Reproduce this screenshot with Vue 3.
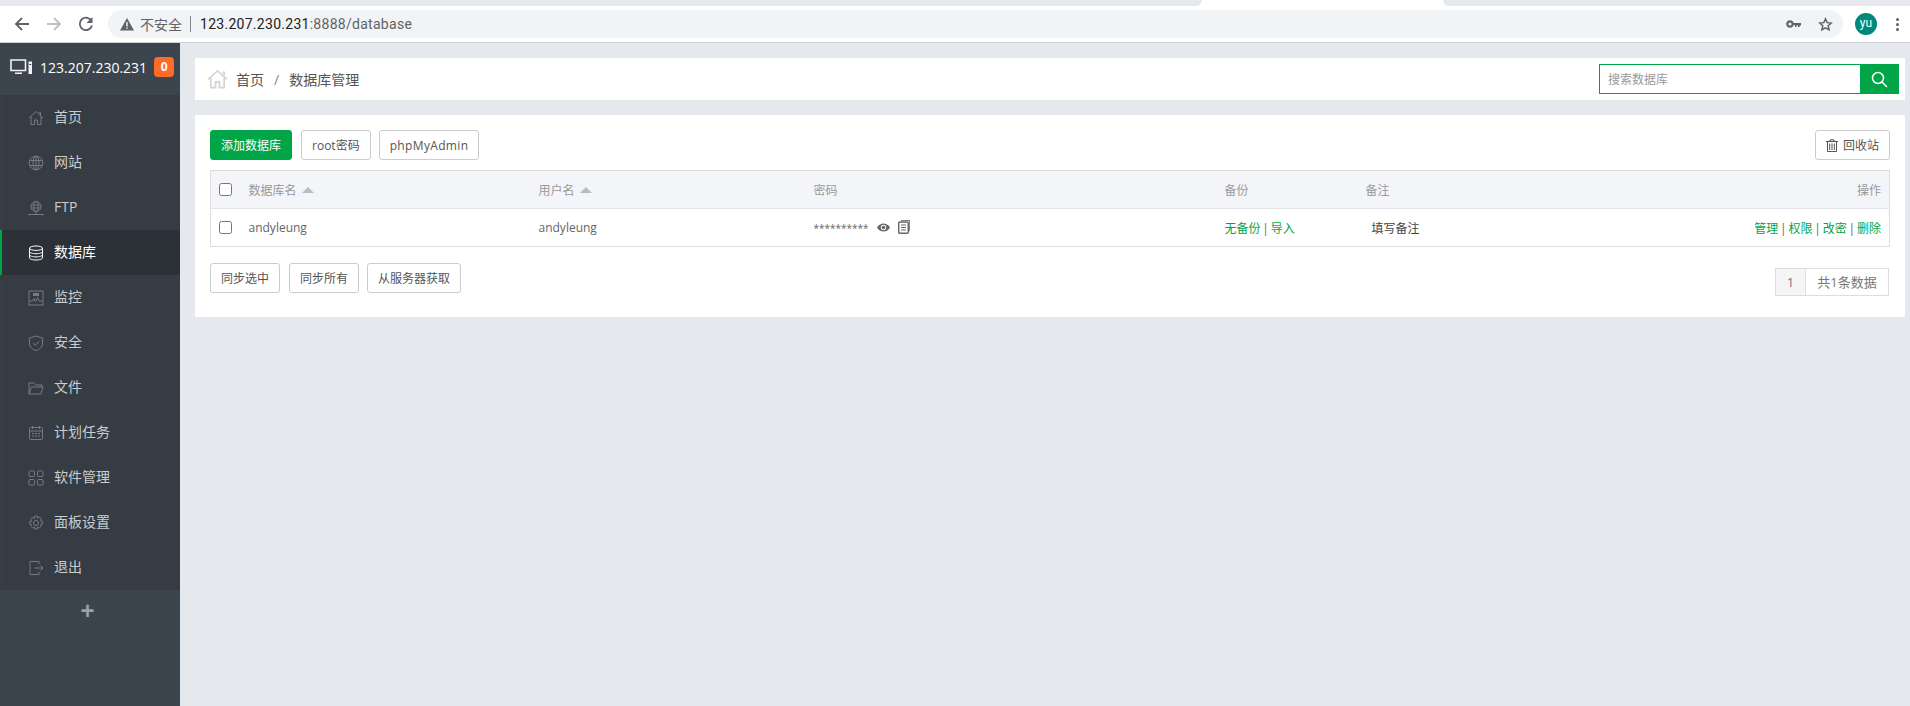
<template>
  <div class="page">
    <div class="tabstrip">
      <div class="tab-a"></div>
      <div class="tab-b"></div>
    </div>
    <div class="toolbar">
      <svg class="nav-ic first" width="16" height="16" viewBox="0 0 16 16"><path d="M15 8H2.500M8 2 2 8l6 6" fill="none" stroke="#5f6368" stroke-width="1.800"/></svg>
      <svg class="nav-ic" width="16" height="16" viewBox="0 0 16 16"><path d="M1 8h12.500M8 2l6 6-6 6" fill="none" stroke="#bdc1c6" stroke-width="1.800"/></svg>
      <svg class="nav-ic" width="16" height="16" viewBox="0 0 16 16"><path d="M13.600 5.200A6.200 6.200 0 1 0 14 9.500" fill="none" stroke="#5f6368" stroke-width="1.800"/><path d="M14.500 1v6h-6z" fill="#5f6368"/></svg>
      <div class="omnibox">
        <svg width="16" height="14" viewBox="0 0 16 14"><path d="M8 1 15 13.500H1z" fill="#5f6368"/><path d="M7.300 5h1.400v4.500H7.300zM7.300 10.400h1.400v1.400H7.300z" fill="#f1f3f4"/></svg>
        <span class="insecure">不安全</span>
        <span class="sep"></span>
        <span class="url"><span class="host">123.207.230.231</span>:8888/database</span>
        <svg class="key" width="15" height="8" viewBox="0 0 15 8"><circle cx="4" cy="4" r="2.700" fill="none" stroke="#5f6368" stroke-width="2.200"/><path d="M7 3h8v2.400h-1.400v1.600h-1.600V5.400H10.500V7H9V5H7z" fill="#5f6368"/></svg>
        <svg class="star" width="15" height="15" viewBox="0 0 24 24"><path d="m12 3 2.700 6 6.500.7-4.900 4.400 1.400 6.400L12 17.200l-5.700 3.300 1.400-6.400-4.900-4.400 6.500-.7z" fill="none" stroke="#5f6368" stroke-width="2.400"/></svg>
      </div>
      <div class="avatar">yu</div>
      <div class="dots"><i></i><i></i><i></i></div>
    </div>
    <div class="shell">
      <aside class="sidebar">
        <div class="server">
          <svg width="22" height="16" viewBox="0 0 22 16"><path d="M1 1h14.500v10.500H1z" fill="none" stroke="#f2f2f2" stroke-width="1.600"/><path d="M5 13.500h7v1.500H5z" fill="#f2f2f2"/><path d="M18.500 2.500h3.500V15h-3.500z" fill="#f2f2f2"/><path d="M19.300 5h2v1h-2z" fill="#3c444d"/></svg>
          <span class="ip">123.207.230.231</span>
          <span class="badge">0</span>
        </div>
        <nav class="menu">
          <a v-for="item in menu" :key="item.name" class="menu-item" :class="{ active: item.active }">
            <svg class="menu-ic" width="16" height="16" viewBox="0 0 16 16" v-html="item.icon"></svg>
            <span>{{ item.name }}</span>
          </a>
        </nav>
        <div class="plus">+</div>
      </aside>
      <main class="content">
        <div class="crumb-bar">
          <svg class="home" width="21" height="20" viewBox="0 0 22 20"><path d="M1 10.500 11 1.500l10 9M4 8.500V19h5v-6h4v6h5V8.500M16 3h2v3.500" fill="none" stroke="#d4d4d4" stroke-width="1.800"/></svg>
          <span class="crumb">首页</span>
          <span class="slash">/</span>
          <span class="crumb">数据库管理</span>
          <div class="search">
            <input class="search-input" placeholder="搜索数据库" />
            <button class="search-btn">
              <svg width="17" height="17" viewBox="0 0 17 17"><circle cx="7" cy="7" r="5.500" fill="none" stroke="#fff" stroke-width="1.500"/><path d="m11 11 5 5" stroke="#fff" stroke-width="1.500"/></svg>
            </button>
          </div>
        </div>
        <section class="panel">
          <div class="actions">
            <button class="btn primary">添加数据库</button>
            <button class="btn">root密码</button>
            <button class="btn wide">phpMyAdmin</button>
            <button class="btn recycle">
              <svg width="12" height="13" viewBox="0 0 12 13"><path d="M0 2.500h12M4 2.500V.8h4v1.700M1.500 2.500V12.500h9V2.500M3.700 4.500v6.500M6 4.500v6.500M8.300 4.500v6.500" fill="none" stroke="#555" stroke-width="1"/></svg>
              回收站
            </button>
          </div>
          <table class="grid">
            <colgroup>
              <col style="width: 38px" /><col style="width: 290px" /><col style="width: 275px" /><col style="width: 411px" /><col style="width: 141px" /><col /><col style="width: 300px" />
            </colgroup>
            <thead>
              <tr>
                <th><input type="checkbox" class="check" /></th>
                <th>数据库名 <i class="caret"></i></th>
                <th>用户名 <i class="caret"></i></th>
                <th>密码</th>
                <th>备份</th>
                <th>备注</th>
                <th class="right">操作</th>
              </tr>
            </thead>
            <tbody>
              <tr>
                <td><input type="checkbox" class="check" /></td>
                <td>andyleung</td>
                <td>andyleung</td>
                <td>
                  <span class="pw">**********</span>
                  <svg class="eye" width="13" height="9" viewBox="0 0 13 9"><path d="M0 4.500C2 1.500 4 .5 6.500.5S11 1.500 13 4.500C11 7.500 9 8.500 6.500 8.500S2 7.500 0 4.500z" fill="#666"/><circle cx="6.500" cy="4.500" r="2.700" fill="#fff"/><circle cx="6.500" cy="4.500" r="1.800" fill="#666"/></svg>
                  <svg class="copy" width="12" height="14" viewBox="0 0 12 14"><path d="M3 0h9v11h-1V1H3z" fill="#888"/><rect x=".7" y="2" width="9.600" height="11.300" rx="1" fill="#fff" stroke="#666" stroke-width="1.400"/><path d="M3 5h5M3 7.500h5M3 10h5" stroke="#666"/></svg>
                </td>
                <td class="ops"><a class="link">无备份</a> | <a class="link">导入</a></td>
                <td class="note">填写备注</td>
                <td class="right ops"><a class="link">管理</a> | <a class="link">权限</a> | <a class="link">改密</a> | <a class="link">删除</a></td>
              </tr>
            </tbody>
          </table>
          <div class="footer">
            <button class="btn">同步选中</button>
            <button class="btn">同步所有</button>
            <button class="btn">从服务器获取</button>
            <div class="pager">
              <span class="page-cur">1</span>
              <span class="page-total">共1条数据</span>
            </div>
          </div>
        </section>
      </main>
    </div>
  </div>
</template>

<script setup>
const stroke = 'fill="none" stroke="#767b80" stroke-width="1"'

const menu = [
  { name: '首页', icon: `<path d="M1 8 8 1.500 15 8M3 6.500V14.500h3.500V10h3v4.500H13V6.500M11 2.500h1.500V5" ${stroke}/>` },
  { name: '网站', icon: `<circle cx="8" cy="8" r="6.800" ${stroke}/><ellipse cx="8" cy="8" rx="3" ry="6.800" ${stroke}/><path d="M1.500 5.500h13M1.500 10.500h13M8 1v14" ${stroke}/>` },
  { name: 'FTP', icon: `<circle cx="8" cy="6.500" r="5" ${stroke}/><ellipse cx="8" cy="6.500" rx="2.200" ry="5" ${stroke}/><path d="M3 5h10M3 8h10M8 11.500V14M0 14.500h16" ${stroke}/>` },
  { name: '数据库', active: true, icon: `<ellipse cx="8" cy="3.200" rx="6.500" ry="2.200" fill="none" stroke="#fff"/><path d="M1.500 3.200v9.600c0 1.200 2.900 2.200 6.500 2.200s6.500-1 6.500-2.200V3.200M1.500 6.500c0 1.200 2.900 2.200 6.500 2.200s6.500-1 6.500-2.200M1.500 9.700c0 1.200 2.900 2.200 6.500 2.200s6.500-1 6.500-2.200" fill="none" stroke="#fff"/>` },
  { name: '监控', icon: `<rect x="1" y="1" width="14" height="14" ${stroke}/><path d="M2 11h2.500l1.500-2.500 1.500 3 2-4 1.500 3.500H14" ${stroke}/><path d="M5 3h6v3H5z" fill="#767b80"/>` },
  { name: '安全', icon: `<path d="M8 1 14.500 3v6c0 3-3 5.500-6.500 6.500C4.500 14.500 1.500 12 1.500 9V3z" ${stroke}/><path d="m5 8 2.200 2.200L11 6.500" ${stroke}/>` },
  { name: '文件', icon: `<path d="M1 14V3h5l1.500 2H14v2M1 14 3.500 7H15l-2 7z" ${stroke}/>` },
  { name: '计划任务', icon: `<rect x="1.500" y="2.500" width="13" height="12" rx="1" ${stroke}/><path d="M1.500 6h13M4.500 1v3M11.500 1v3M4 8.500h2M7 8.500h2M10 8.500h2M4 11h2M7 11h2M10 11h2" ${stroke}/>` },
  { name: '软件管理', icon: `<rect x="1" y="1" width="5.500" height="5.500" rx="1" ${stroke}/><rect x="9.500" y="1" width="5.500" height="5.500" rx="1" ${stroke}/><rect x="1" y="9.500" width="5.500" height="5.500" rx="1" ${stroke}/><rect x="9.500" y="9.500" width="5.500" height="5.500" rx="1" ${stroke}/>` },
  { name: '面板设置', icon: `<circle cx="8" cy="8" r="2.500" ${stroke}/><path d="m6.700 1h2.600l.4 2 1.800-.9 1.900 1.900-.9 1.800 2 .4v2.600l-2 .4.900 1.800-1.900 1.900-1.800-.9-.4 2H6.700l-.4-2-1.800.9-1.900-1.900.9-1.800-2-.4V6.700l2-.4-.9-1.800L4.500 2.600l1.800.9z" ${stroke}/>` },
  { name: '退出', icon: `<path d="M11 4V1.500H2v13h9V12M6.500 8H15M12.500 5.500 15 8l-2.500 2.500" ${stroke}/>` },
]
</script>

<style>
html, body {
  margin: 0;
  height: 100%;
  overflow: hidden;
}
</style>

<style scoped>
.page {
  width: 1910px;
  height: 706px;
  display: flex;
  flex-direction: column;
  font-family: "Open Sans", "Noto Sans CJK SC", sans-serif;
  background: #e5e8ed;
}
.tabstrip {
  height: 6px;
  flex: none;
  display: flex;
  justify-content: space-between;
  background: #fff;
}
.tab-a {
  width: 1202px;
  background: #e5e8ec;
  border-bottom-right-radius: 6px;
}
.tab-b {
  width: 467px;
  background: #e5e8ec;
  border-bottom-left-radius: 6px;
}
.toolbar {
  height: 36px;
  flex: none;
  display: flex;
  align-items: center;
  background: #fff;
  border-bottom: 1px solid #ced1d6;
}
.nav-ic { margin-left: 16px; }
.nav-ic.first { margin-left: 14px; }
.omnibox {
  width: 1735px;
  height: 28px;
  margin-left: 14px;
  border-radius: 14px;
  background: #f1f3f4;
  display: flex;
  align-items: center;
  padding-left: 11px;
  box-sizing: border-box;
  font-family: "Roboto", "Noto Sans CJK SC", sans-serif;
  font-size: 14px;
  color: #5f6368;
}
.insecure { margin-left: 5px; font-size: 14px; }
.sep { width: 1px; height: 16px; background: #80868b; margin: 0 9px 0 8px; }
.url { flex: 1; letter-spacing: .28px; }
.host { color: #202124; }
.key { margin-right: 17px; }
.star { margin-right: 10px; }
.avatar {
  width: 22px;
  height: 22px;
  margin-left: 12px;
  border-radius: 50%;
  background: #00897b;
  color: #fff;
  font: 12px/20px "Roboto", sans-serif;
  text-align: center;
}
.dots {
  margin-left: 19px;
  display: flex;
  flex-direction: column;
  gap: 2px;
}
.dots i { width: 3px; height: 3px; border-radius: 50%; background: #5f6368; }
.shell {
  flex: 1;
  display: flex;
  min-height: 0;
}
.sidebar {
  width: 180px;
  flex: none;
  background: #3c444d;
}
.server {
  height: 52px;
  display: flex;
  align-items: center;
  padding-left: 10px;
  padding-bottom: 4px;
  box-sizing: border-box;
  color: #fff;
}
.ip { margin-left: 8px; font-size: 14px; }
.badge {
  margin-left: 7px;
  width: 20px;
  height: 20px;
  border-radius: 4px;
  background: #ff6a26;
  font-size: 12px;
  font-weight: 700;
  line-height: 20px;
  text-align: center;
}
.menu { background: #353c44; }
.menu-item {
  height: 45px;
  display: flex;
  align-items: center;
  padding-left: 26px;
  border-left: 2px solid #3a3e42;
  color: #ccc;
  font-size: 14px;
}
.menu-item span { margin-left: 10px; line-height: 18px; padding-bottom: 2px; }
.menu-item.active {
  background: #2c3138;
  border-left-color: #00a548;
  color: #fff;
}
.plus {
  margin-top: 9px;
  padding-right: 5px;
  text-align: center;
  font: 700 24px/24px "Liberation Sans", sans-serif;
  color: #9aa0a6;
}
.content {
  flex: 1;
  padding: 15px 5px 0 15px;
  min-width: 0;
}
.crumb-bar {
  height: 42px;
  background: #fff;
  display: flex;
  align-items: center;
  padding-left: 12px;
  font-size: 14px;
  color: #555;
}
.home { margin-right: 8px; }
.slash { margin: 0 10px; color: #888; }
.search {
  margin-left: auto;
  margin-right: 6px;
  display: flex;
  height: 30px;
}
.search-input {
  width: 261px;
  box-sizing: border-box;
  border: 1px solid #00a548;
  border-right: 0;
  outline: 0;
  padding: 0 8px;
  font: 12px "Open Sans", "Noto Sans CJK SC", sans-serif;
}
.search-input::placeholder { color: #999; }
.search-btn {
  width: 39px;
  border: 0;
  padding: 0;
  background: #00a548;
  display: flex;
  align-items: center;
  justify-content: center;
}
.panel {
  margin-top: 15px;
  background: #fff;
  height: 202px;
  padding: 15px 15px 0;
  box-sizing: border-box;
}
.actions, .footer {
  display: flex;
  gap: 8px;
}
.actions .btn:first-child, .footer .btn:first-child { margin-right: 1px; }
.btn {
  height: 30px;
  padding: 0 10px;
  box-sizing: border-box;
  background: #fff;
  border: 1px solid #ccc;
  border-radius: 3px;
  color: #555;
  font: 12px "Open Sans", "Noto Sans CJK SC", sans-serif;
}
.btn.wide { letter-spacing: .35px; }
.btn.primary {
  background: #00a548;
  border-color: #00a548;
  color: #fff;
}
.recycle {
  margin-left: auto;
  display: flex;
  align-items: center;
  gap: 5px;
}
.grid {
  width: 100%;
  margin-top: 10px;
  border-collapse: collapse;
  table-layout: fixed;
  border: 1px solid #ddd;
  font-size: 12px;
}
.grid th {
  height: 37px;
  padding: 0;
  background: #f3f5f9;
  border-bottom: 1px solid #e3e5e8;
  color: #999;
  font-weight: 400;
  text-align: left;
}
.grid td {
  height: 37px;
  padding: 0;
  color: #666;
}
.grid th:first-child, .grid td:first-child { padding-left: 8px; }
.grid .right { text-align: right; padding-right: 8px; }
.ops { word-spacing: -1.3px; }
.check {
  width: 13px;
  height: 13px;
  margin: 0;
  display: block;
}
.caret {
  display: inline-block;
  margin-left: 2px;
  vertical-align: 2px;
  border: 6px solid transparent;
  border-top: 0;
  border-bottom: 6px solid #bbb;
}
.pw { font-size: 10px; }
.eye { margin-left: 8px; vertical-align: 0; }
.copy { margin-left: 8px; vertical-align: -2px; }
.link { color: #00a548; }
.note { color: #444 !important; padding-left: 6px !important; }
.footer { margin-top: 16px; align-items: flex-start; }
.pager {
  margin-left: auto;
  margin-top: 5px;
  margin-right: 1px;
  display: flex;
  height: 28px;
  line-height: 26px;
  box-sizing: border-box;
  border: 1px solid #ddd;
  font-size: 13px;
  color: #777;
}
.page-cur {
  width: 29px;
  text-align: center;
  background: #f5f5f5;
  border-right: 1px solid #ddd;
}
.page-total { width: 82px; text-align: center; }
</style>
